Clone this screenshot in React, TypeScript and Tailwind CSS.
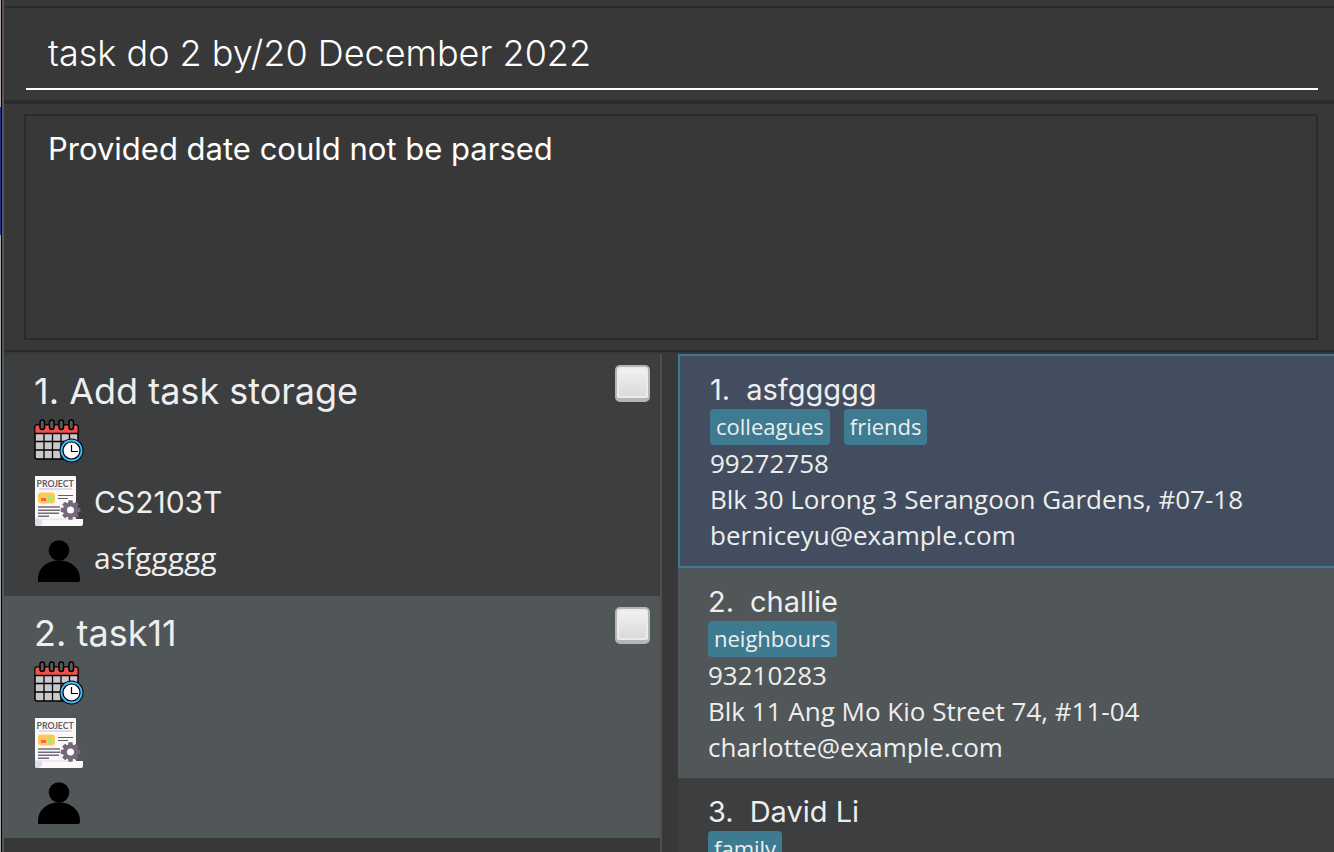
import React from 'react';

type Task = { id: number; title: string; project: string; person: string };
type Person = { id: number; name: string; tags: string[]; details: string[] };

const tasks: Task[] = [
  { id: 1, title: 'Add task storage', project: 'CS2103T', person: 'asfggggg' },
  { id: 2, title: 'task11', project: '', person: '' },
];

const people: Person[] = [
  { id: 1, name: 'asfggggg', tags: ['colleagues', 'friends'], details: ['99272758', 'Blk 30 Lorong 3 Serangoon Gardens, #07-18', 'berniceyu@example.com'] },
  { id: 2, name: 'challie', tags: ['neighbours'], details: ['93210283', 'Blk 11 Ang Mo Kio Street 74, #11-04', 'charlotte@example.com'] },
  { id: 3, name: 'David Li', tags: ['family'], details: [] },
];

function CalendarIcon() {
  return (
    <svg viewBox="0 0 50 44" className="h-11 w-[50px] shrink-0" aria-hidden="true">
      <rect x="1" y="6" width="43" height="34" rx="2" fill="#c9c9cb" stroke="#000" strokeWidth="1.500" />
      <path d="M1.700 6.700h41.600V14H1.700z" fill="#f0524d" />
      <path d="M1 14.500h43M1 22.500h43M1 31h43M10 14v26M18.500 14v26M27 14v26M35.500 14v26" stroke="#000" strokeWidth="1.300" />
      {[8, 17.5, 27, 37].map((x) => (
        <rect key={x} x={x - 2} y="1" width="4.500" height="9.500" rx="2.200" fill="#5b5b5b" stroke="#000" strokeWidth="1.500" />
      ))}
      <circle cx="37.500" cy="31.500" r="12" fill="#000" />
      <circle cx="37.500" cy="31.500" r="11" fill="#4ab8f0" />
      <circle cx="37.500" cy="31.500" r="8.500" fill="#fff" stroke="#000" strokeWidth="1.200" />
      <path d="M37.500 26v6.500h6.500" fill="none" stroke="#000" strokeWidth="1.200" />
    </svg>
  );
}

function ProjectIcon() {
  const teeth = [0, 45, 90, 135, 180, 225, 270, 315];
  return (
    <svg viewBox="0 0 48 50" className="h-[50px] w-12 shrink-0" aria-hidden="true">
      <path d="M0 0h40q1 0 1 1v42H48v5q0 2-2 2H2q-2 0-2-2z" fill="#faf9f8" />
      <path d="M4 12h33v2H4zM0 42.500h40v1H7v3q0 3.500-4 3.500H2q-2 0-2-2z" fill="#dedbef" />
      <text x="1.500" y="10.500" fontSize="8.700" fontWeight="700" fill="#655a68" className="font-['Lato',sans-serif]">PROJECT</text>
      <rect x="3" y="16.500" width="17" height="11" rx="3" fill="#ffc957" />
      <path d="M6 22h5v3H6z" fill="#f75f62" />
      <path d="M13 19h4.500v6H13z" fill="#b6e56d" />
      <path d="M23 19.500h15M23 22.500h10" stroke="#655a68" strokeWidth="1" />
      <path d="M3 31h22M3 34.200h22M3 37.200h21M3 40.200h11" stroke="#75687a" strokeWidth="1.600" />
      <g fill="#75687a">
        {teeth.map((a) => (
          <path key={a} d="M33.500 24.200h4l.7 5h-5.400z" transform={`rotate(${a} 35.5 34)`} />
        ))}
        <circle cx="35.500" cy="34" r="7.500" />
      </g>
      <circle cx="35.500" cy="34" r="3.500" fill="#fff" />
    </svg>
  );
}

function PersonIcon() {
  return (
    <svg viewBox="0 0 48 42" className="h-[42px] w-12 shrink-0" aria-hidden="true">
      <circle cx="24" cy="10.500" r="10.300" />
      <path d="M3 42v-3C3 28 12 20.500 24 20.500S45 28 45 39v1q0 2-2 2z" />
    </svg>
  );
}

function TaskCard({ task }: { task: Task }) {
  return (
    <li className="flex items-start justify-between bg-[#3c3e3f] pt-[11px] pr-2.5 pb-3 pl-[30px] even:bg-[#515658]">
      <div className="flex flex-col">
        <label htmlFor={`task-${task.id}`} className="h-[54px] font-['Inter',sans-serif] text-[36px] leading-[52px]">
          {task.id}. {task.title}
        </label>
        <div className="flex h-[57px] items-start"><CalendarIcon /></div>
        <div className="flex h-16 items-start gap-[11px] pl-px">
          <ProjectIcon />
          <span className="font-['Inter',sans-serif] text-[30px] leading-[52px]">{task.project}</span>
        </div>
        <div className="flex h-11 items-start gap-[11px] pl-px">
          <PersonIcon />
          <span className="text-[30px] leading-9">{task.person}</span>
        </div>
      </div>
      <input
        id={`task-${task.id}`}
        type="checkbox"
        className="h-[37px] w-[35px] appearance-none rounded-[5px] border-2 border-b-4 border-[#b4b5b5] bg-linear-to-b from-[#f2f2f2] to-[#d9d9d9] shadow-[inset_0_0_0_2px_#ebebeb]"
      />
    </li>
  );
}

function PersonCard({ person, selected }: { person: Person; selected: boolean }) {
  return (
    <li
      className={
        selected
          ? 'border-2 border-r-0 border-[#3e7b91] bg-[#434d60] pt-4 pr-4 pb-[13px] pl-[30px]'
          : 'bg-[#3c3e3f] pt-4 pr-4 pb-[13px] pl-[30px] even:bg-[#515658]'
      }
    >
      <h2 className="flex h-[37px] gap-4 font-['Inter',sans-serif] text-[29px] leading-9">
        <span>{person.id}.</span>
        <span>{person.name}</span>
      </h2>
      <div className="flex h-9 gap-3.5">
        {person.tags.map((tag) => (
          <span key={tag} className="rounded bg-[#3e7b91] px-1.5 text-[22px] leading-[34px]">{tag}</span>
        ))}
      </div>
      <div className="text-[26px] leading-9 whitespace-nowrap">
        {person.details.map((line) => <p key={line}>{line}</p>)}
      </div>
    </li>
  );
}

export default function App() {
  return (
    <div className="flex h-screen overflow-hidden bg-[#383838] font-['Open_Sans',sans-serif] text-[#eeeeee]">
      <div className="flex w-1 shrink-0">
        <div className="flex w-px flex-col">
          <div className="h-[107px] bg-[#b4a2a5]" />
          <div className="h-32 bg-[#26358c]" />
          <div className="grow bg-[#a5a8a8]" />
        </div>
        <div className="w-px bg-black" />
        <div className="w-0.5 bg-[#54585a]" />
      </div>
      <main className="flex min-w-0 grow flex-col">
        <div className="mt-1.5 h-[94px] shrink-0 border-t-2 border-[#2b2b2b] pt-4 pr-4 pl-[22px]">
          <input
            aria-label="Command"
            defaultValue="task do 2 by/20 December 2022"
            className="h-[66px] w-full border-b-2 border-white bg-transparent px-[22px] pb-1.5 font-['Inter',sans-serif] text-[36px] font-light text-white outline-none"
          />
        </div>
        <div className="h-[252px] shrink-0 border-t-4 border-b-2 border-[#2b2b2b] px-4 pt-2.5 pl-5">
          <textarea
            aria-label="Result"
            readOnly
            value="Provided date could not be parsed"
            className="block h-[226px] w-full resize-none border-2 border-[#2b2b2b] bg-transparent px-[22px] pt-[11px] font-['Inter',sans-serif] text-[31px] leading-[44px] text-white outline-none"
          />
        </div>
        <div className="flex min-h-0 grow pt-0.5">
          <section aria-label="Tasks" className="min-w-0 flex-1 border-r-2 border-[#505050]">
            <ul>{tasks.map((task) => <TaskCard key={task.id} task={task} />)}</ul>
          </section>
          <section aria-label="People" className="ml-4 min-w-0 flex-1">
            <ul>{people.map((p) => <PersonCard key={p.id} person={p} selected={p.id === 1} />)}</ul>
          </section>
        </div>
      </main>
    </div>
  );
}
